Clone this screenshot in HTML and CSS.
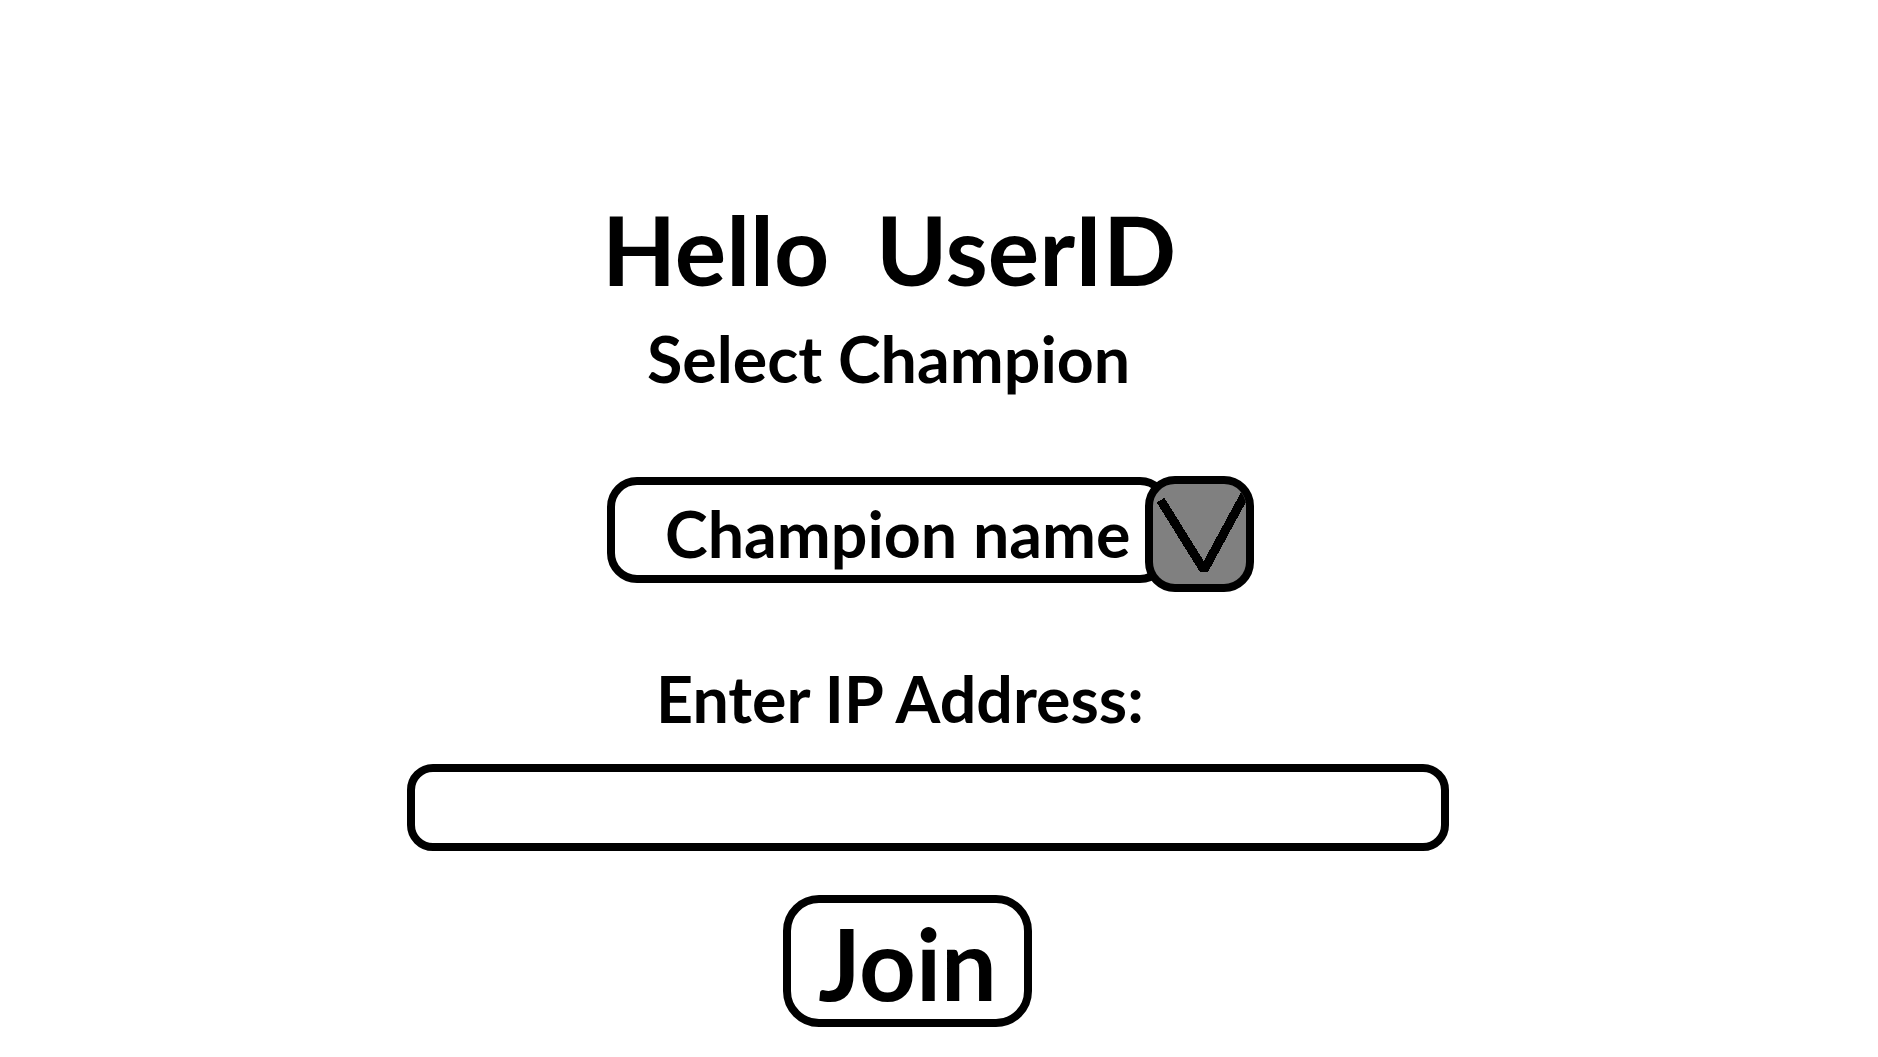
FILE: index.html
```html
<!DOCTYPE html>
<html>
<head>
<meta charset="utf-8">
<link rel="stylesheet" href="styles.css">
</head>
<body>
<main class="screen">
  <h1 class="title">Hello&nbsp;&nbsp;UserID</h1>
  <h2 class="subtitle">Select Champion</h2>
  <div class="select">
    <div class="select-field">Champion name</div>
    <div class="select-toggle">
      <svg class="check" viewBox="0 0 93 100" width="93" height="100">
        <path d="M10 20 L51 86 L90 14" fill="none" stroke="#000" stroke-width="9" stroke-linejoin="bevel" stroke-linecap="square"/>
      </svg>
    </div>
  </div>
  <label class="ip-label">Enter IP Address:</label>
  <div class="ip-input"></div>
  <button class="join">Join</button>
</main>
</body>
</html>
```

FILE: styles.css
```css
html, body {
  margin: 0;
  padding: 0;
  background: #fff;
}
body {
  width: 1878px;
  height: 1057px;
  overflow: hidden;
  font-family: "Lato", "Liberation Sans", sans-serif;
  font-weight: 700;
  color: #000;
}
.screen {
  display: flex;
  flex-direction: column;
  align-items: flex-start;
  padding-top: 201px;
}
.title {
  margin: 0 0 0 602px;
  font-size: 96.3px;
  line-height: 97px;
  font-weight: 700;
  white-space: nowrap;
}
.subtitle {
  margin: 28px 0 0 647px;
  font-size: 64.5px;
  line-height: 64.5px;
  font-weight: 700;
  white-space: nowrap;
}
.select {
  margin: 85px 0 0 607px;
  display: flex;
  align-items: flex-start;
}
.select-field {
  margin-top: 1px;
  width: 563px;
  height: 106px;
  box-sizing: border-box;
  border: 8px solid #000;
  border-radius: 30px;
  padding: 16px 0 0 50px;
  font-size: 64.5px;
  line-height: 64.5px;
  white-space: nowrap;
  background: #fff;
}
.select-toggle {
  width: 109px;
  height: 116px;
  box-sizing: border-box;
  margin-left: -25px;
  border: 8px solid #000;
  border-radius: 30px;
  background: #808080;
  position: relative;
  overflow: hidden;
}
.check {
  display: block;
  shape-rendering: crispEdges;
}
.ip-label {
  margin: 74px 0 0 656px;
  font-size: 64.5px;
  line-height: 64.5px;
  white-space: nowrap;
}
.ip-input {
  margin: 34px 0 0 407px;
  width: 1042px;
  height: 87px;
  box-sizing: border-box;
  border: 8px solid #000;
  border-radius: 26px;
}
.join {
  margin: 44px 0 0 783px;
  width: 249px;
  height: 132px;
  box-sizing: border-box;
  border: 8px solid #000;
  border-radius: 36px;
  background: #fff;
  padding: 10px 0 0 0;
  font-family: "Lato", "Liberation Sans", sans-serif;
  font-weight: 700;
  font-size: 99px;
  line-height: 99px;
  color: #000;
  display: flex;
  justify-content: center;
  align-items: flex-start;
}
```
